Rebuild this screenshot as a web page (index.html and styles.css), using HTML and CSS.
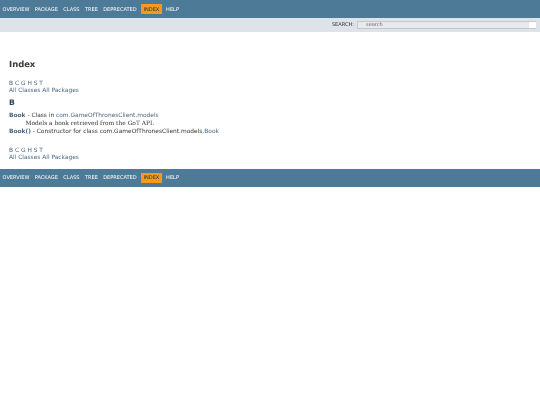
FILE: index.html
```html
<!DOCTYPE html>
<html lang="en">
<head>
<meta charset="utf-8">
<title>Index</title>
<link rel="stylesheet" href="styles.css">
</head>
<body>
<header>
  <nav class="topnav">
    <ul class="navlist">
      <li><a href="#">OVERVIEW</a></li>
      <li><a href="#">PACKAGE</a></li>
      <li><a href="#">CLASS</a></li>
      <li><a href="#">TREE</a></li>
      <li><a href="#">DEPRECATED</a></li>
      <li class="current">INDEX</li>
      <li><a href="#">HELP</a></li>
    </ul>
  </nav>
  <div class="subnav">
    <label class="search-label" for="search">SEARCH:</label>
    <div class="search-box"><input id="search" type="text" value="search"><span class="reset"></span></div>
  </div>
</header>
<main class="content">
  <h1>Index</h1>
  <div class="letters"><a href="#">B</a> <a href="#">C</a> <a href="#">G</a> <a href="#">H</a> <a href="#">S</a> <a href="#">T</a></div>
  <div class="all"><a href="#">All Classes</a> <a href="#">All Packages</a></div>
  <h2>B</h2>
  <dl>
    <dt><a href="#"><b>Book</b></a> - Class in <a href="#">com.GameOfThronesClient.models</a></dt>
    <dd>Models a book retrieved from the GoT API.</dd>
    <dt><a href="#"><b>Book()</b></a> - Constructor for class com.GameOfThronesClient.models.<a href="#">Book</a></dt>
  </dl>
  <div class="letters bottom"><a href="#">B</a> <a href="#">C</a> <a href="#">G</a> <a href="#">H</a> <a href="#">S</a> <a href="#">T</a></div>
  <div class="all"><a href="#">All Classes</a> <a href="#">All Packages</a></div>
</main>
<footer class="topnav bottom-nav">
  <ul class="navlist">
    <li><a href="#">OVERVIEW</a></li>
    <li><a href="#">PACKAGE</a></li>
    <li><a href="#">CLASS</a></li>
    <li><a href="#">TREE</a></li>
    <li><a href="#">DEPRECATED</a></li>
    <li class="current">INDEX</li>
    <li><a href="#">HELP</a></li>
  </ul>
</footer>
</body>
</html>
```
FILE: styles.css
```css
html, body { margin: 0; padding: 0; background: #fff; }
body {
  font-family: "DejaVu Sans", sans-serif;
  font-size: 5.9px;
  line-height: 7px;
  color: #353833;
  text-rendering: geometricPrecision;
  filter: blur(0.3px);
  min-height: 405px;
}
a { color: #4a6782; text-decoration: none; }
.topnav {
  height: 18px;
  background: #4d7a97;
  display: flex;
  align-items: center;
}
.navlist {
  list-style: none;
  margin: 0;
  padding: 0 0 0 1px;
  display: flex;
  align-items: center;
  gap: 2.3px;
  font-size: 5.06px;
}
.navlist li { color: #fff; padding: 2px 1.5px 0; }
.navlist a { color: #fff; }
.navlist .current {
  background: #f8981d;
  color: #253441;
  padding: 3.5px 3px 1.5px;
  line-height: 5px;
}
.subnav {
  height: 14px;
  background: #dee3e9;
  display: flex;
  justify-content: flex-end;
  align-items: center;
}
.search-label { font-size: 5.06px; color: #353833; margin-right: 3px; }
.search-box {
  width: 179px;
  height: 8px;
  margin-right: 4px;
  display: flex;
  background: #e8e9eb;
  border: 1px solid #c5c8cc;
  border-width: 1px 0 1px 1px;
  box-sizing: border-box;
}
.search-box input {
  flex: 1;
  min-width: 0;
  border: 0;
  background: transparent;
  padding: 0 0 0 8px;
  font: 5.06px "DejaVu Sans", sans-serif;
  text-rendering: geometricPrecision;
  color: #666;
  outline: none;
}
.reset { width: 7px; background: #fff; }
.content { padding: 26px 0 0 9px; }
h1 {
  margin: 0 0 10.5px;
  font-size: 8.44px;
  line-height: 12px;
  font-weight: bold;
  color: #353833;
}
h2 {
  margin: 2px 0 4px;
  font-size: 7.6px;
  line-height: 11px;
  color: #2c4557;
}
dl { margin: 0; }
dt { line-height: 8px; }
dd {
  margin: 0 0 0 16.5px;
  font-family: "DejaVu Serif", serif;
  font-size: 5.9px;
  line-height: 8px;
}
.bottom { margin-top: 12.6px; }
.bottom-nav { margin-top: 6.9px; }
```
